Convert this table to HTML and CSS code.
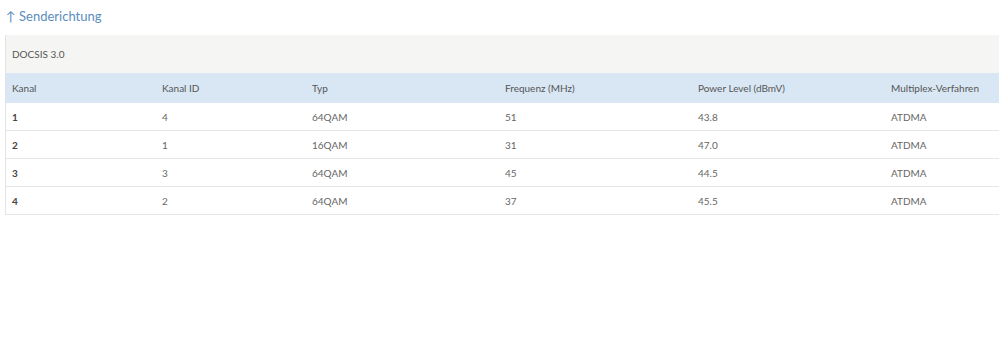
FILE: index.html
```html
<!DOCTYPE html>
<html lang="de">
<head>
<meta charset="utf-8">
<title>Senderichtung</title>
<link rel="stylesheet" href="styles.css">
</head>
<body>
<div class="page">
  <h2 class="title">↑ Senderichtung</h2>
  <div class="panel">
    <div class="caption">DOCSIS 3.0</div>
    <table class="grid">
      <colgroup>
        <col class="c1"><col class="c2"><col class="c3"><col class="c4"><col class="c5"><col class="c6">
      </colgroup>
      <thead>
        <tr><th>Kanal</th><th>Kanal ID</th><th>Typ</th><th>Frequenz (MHz)</th><th>Power Level (dBmV)</th><th>Multiplex-Verfahren</th></tr>
      </thead>
      <tbody>
        <tr><td class="num">1</td><td>4</td><td>64QAM</td><td>51</td><td>43.8</td><td>ATDMA</td></tr>
        <tr><td class="num">2</td><td>1</td><td>16QAM</td><td>31</td><td>47.0</td><td>ATDMA</td></tr>
        <tr><td class="num">3</td><td>3</td><td>64QAM</td><td>45</td><td>44.5</td><td>ATDMA</td></tr>
        <tr><td class="num">4</td><td>2</td><td>64QAM</td><td>37</td><td>45.5</td><td>ATDMA</td></tr>
      </tbody>
    </table>
  </div>
</div>
</body>
</html>
```
FILE: styles.css
```css
html, body {
  margin: 0;
  padding: 0;
  background: #fff;
  overflow: hidden;
}
body {
  font-family: Lato, "Liberation Sans", sans-serif;
  color: #555;
}
.page {
  padding: 6px 0 0 5px;
}
.title {
  margin: 0 0 9px 1px;
  font-size: 13px;
  font-weight: normal;
  color: #5a8dbd;
  line-height: 20px;
}
.panel {
  width: 1010px;
  border-left: 1px solid #e3e3e3;
}
.caption {
  background: #f5f5f3;
  height: 38px;
  line-height: 38px;
  padding-left: 6px;
  font-size: 10px;
  color: #555;
}
.grid {
  border-collapse: collapse;
  width: 100%;
  table-layout: fixed;
  font-size: 10px;
}
.c1, .c2 { width: 150px; }
.c3, .c4, .c5 { width: 193px; }
.grid th {
  background: #d9e7f4;
  font-weight: normal;
  text-align: left;
  height: 30px;
  padding: 0 0 0 6px;
  color: #555;
}
.grid td {
  height: 27px;
  padding: 0 0 0 6px;
  border-bottom: 1px solid #e6e6e6;
  color: #666;
}
.grid td.num {
  font-weight: bold;
  color: #444;
}
```
